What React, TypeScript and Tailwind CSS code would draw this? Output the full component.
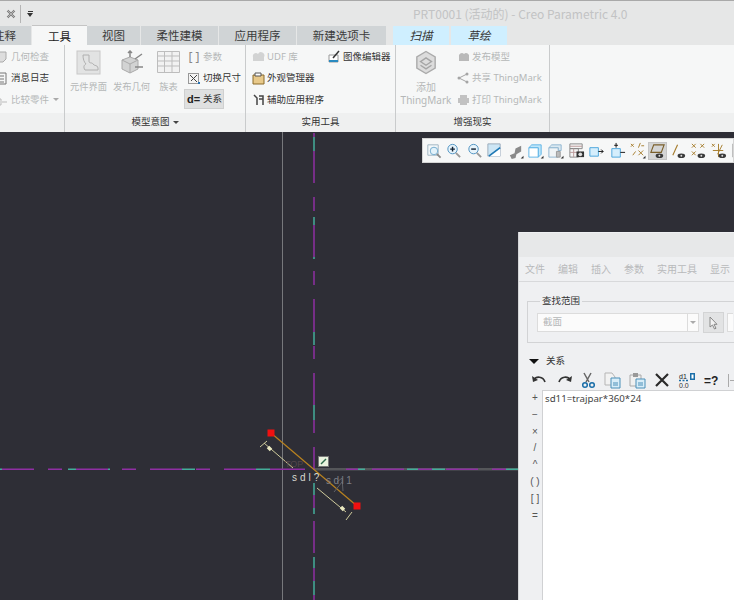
import type { ReactNode } from 'react';

const font = "[font-family:'Noto_Sans','Noto_Sans_CJK_SC',sans-serif]";

function Tab({ label, w }: { label: string; w: string }) {
    return <div className={`${w} h-[19px] mr-px bg-[#d0d4d6] text-[#3c3c3c] leading-[19px] text-center`}>{label}</div>;
}

function SmallRow({ icon, label, muted, className = '' }: { icon: ReactNode; label: string; muted?: boolean; className?: string }) {
    return (
        <div className={`flex items-center gap-[2px] h-[21.500px] text-[9.500px] whitespace-nowrap ${muted ? 'text-[#b5b7b8]' : 'text-[#333]'} ${className}`}>
            <span className="w-[14px] h-[14px] shrink-0 flex items-center justify-center">{icon}</span>
            {label}
        </div>
    );
}

function BigBtn({ icon, label, w }: { icon: ReactNode; label: string; w: string }) {
    return (
        <div className={`${w} shrink-0 flex flex-col items-center text-[9.300px] text-[#b5b7b8] whitespace-nowrap`}>
            <div className="h-[26px] flex items-center">{icon}</div>
            <div className="mt-[5px]">{label}</div>
        </div>
    );
}

function Group({ w, title, caret, children }: { w: string; title?: string; caret?: boolean; children: ReactNode }) {
    return (
        <div className={`${w} shrink-0 h-full flex flex-col border-r border-[#c9cbcc]`}>
            <div className="h-[68px] bg-[#f6f7f7]">{children}</div>
            <div className="flex-1 bg-[#eff0f0] flex items-center justify-center gap-[3px] text-[9.500px] text-[#333]">
                {title}
                {caret && <span className="w-0 h-0 border-x-[3px] border-x-transparent border-t-[3px] border-t-[#444]" />}
            </div>
        </div>
    );
}

const corner = <path d="M14.500 17.500h3v-3z" fill="#333" />;
const eye = (cx: number) => <g><ellipse cx={cx} cy="14.500" rx="4" ry="2.400" fill="#3a3a3a" /><circle cx={cx} cy="14.500" r="1" fill="#ddd" /></g>;

const tools = [
    <g key="a"><path d="M3 3h11v11H3z" fill="#f4f8fa" stroke="#9fb4c2" /><circle cx="9.500" cy="9.500" r="4" fill="#e3f2fa" stroke="#6fa9cc" /><path d="M12.500 12.500l4 4" stroke="#8a8a8a" strokeWidth="1.800" /></g>,
    <g key="b"><circle cx="8" cy="7.500" r="5" fill="#e8f4fb" stroke="#4a90c0" /><path d="M5.500 7.500h5M8 5v5" stroke="#123" strokeWidth="1.500" /><path d="M11.500 11.500l4.500 4.500" stroke="#999" strokeWidth="2" /></g>,
    <g key="c"><circle cx="8" cy="7.500" r="5" fill="#e8f4fb" stroke="#4a90c0" /><path d="M5.500 7.500h5" stroke="#123" strokeWidth="1.500" /><path d="M11.500 11.500l4.500 4.500" stroke="#999" strokeWidth="2" /></g>,
    <g key="d"><path d="M2 2h13v13H2z" fill="#cde6f5" stroke="#9ab" /><path d="M2 15h13V7z" fill="#fff" /><path d="M3 15L15 6" stroke="#1f79b5" strokeWidth="1.800" /></g>,
    <g key="e"><path d="M3 14l5-2 1-5 6-3v6l-5 3-1 4-4 1z" fill="#8a8a8a" />{corner}</g>,
    <g key="f"><path d="M2 6h10v10H2z" fill="#fff" stroke="#5db4e5" /><path d="M2 6l3-3h10v10l-3 3V6z" fill="#bfe6fa" stroke="#5db4e5" />{corner}</g>,
    <g key="g"><path d="M2 6h10v10H2z" fill="#f0f4f6" stroke="#8fb6d0" /><path d="M2 6l3-3h10v6h-3V6z" fill="#dbe9f1" stroke="#8fb6d0" /><path d="M10 10h4v6h-4z" fill="#bbb" stroke="#999" />{corner}</g>,
    <g key="h"><path d="M2 2h13v5H2z M2 7h9v9H2z" fill="#f4f4f4" stroke="#888" /><path d="M2 4.500h13M6 7v9M2 11h9" stroke="#b99" /><path d="M9 10h8v6H9z" fill="#333" /><circle cx="13" cy="13" r="2" fill="#ddd" /></g>,
    <g key="i"><path d="M2 6h9v9H2z" fill="#d5eefc" stroke="#4aa6dc" /><path d="M11 10h5M14 8l2 2-2 2" stroke="#111" fill="none" /></g>,
    <g key="j"><path d="M3 7h9v9H3z" fill="#d5eefc" stroke="#4aa6dc" /><path d="M7.500 1v5M5.500 3.500h4M12 11h5" stroke="#111" fill="none" /></g>,
    <g key="k" stroke="#a67c2c" fill="none"><path d="M2 2l3 3M5 2l-3 3M12 1l-2 5M4 14l3-4M10 9l5 5M15 9l-5 5M13 4h3" /><path d="M14.500 17.500h3v-3z" fill="#333" stroke="none" /></g>,
    <g key="l"><path d="M5 3h11l-3 8H2z" fill="none" stroke="#7a5f2a" strokeWidth="1.200" />{eye(11)}</g>,
    <g key="m"><path d="M3 14L8 3" stroke="#a67c2c" strokeWidth="1.200" />{eye(12)}</g>,
    <g key="n"><path d="M2 2l4 4M6 2l-4 4M11 2l4 4M15 2l-4 4M2 10l4 4M6 10l-4 4" stroke="#a67c2c" />{eye(12)}</g>,
    <g key="o"><path d="M2 2l3 3M5 2l-3 3M9 2v14M3 9h11M13 3L8 13" stroke="#a67c2c" fill="none" />{eye(13)}</g>,
    <path key="p" d="M2 2h14v14H2z" fill="#e6e6e6" stroke="#9a9a9a" />,
];

function Canvas() {
    return (
        <svg className="absolute inset-0 w-full h-full" viewBox="0 0 734 468" fill="none">
            <g transform="translate(0 -132)">
                <path d="M282.500 132V600" stroke="#77787c" />
                <path d="M314 469.300H518" stroke="#55565a" strokeWidth="2.500" />
                <g stroke="#8f2fa3" strokeWidth="1.500">
                    <path d="M314 133V137M314 151V183M314 197V211M314 225V257M314 271V285M314 299V332M314 346V359M314 373V405M314 420V433M314 447V470M314 495V508M314 521V553M314 568V581M314 595V600" />
                    <path d="M2 469.300H34M48 469.300H62M76 469.300H108M122 469.300H136M150 469.300H182M196 469.300H210M224 469.300H256M270 469.300H305M346 469.300H358M372 469.300H404M418 469.300H432M446 469.300H478M492 469.300H506" />
                </g>
                <g stroke="#44ad9a" strokeWidth="1.500">
                    <path d="M314 137V151M314 217V225M314 257V259M314 332V345M314 405V420M314 483V495M314 508V514M314 557V568M314 581V595" />
                    <path d="M0 469.300H2M68 469.300H76M108 469.300H110M182 469.300H195M256 469.300H270M358 469.300H365M407 469.300H418M432 469.300H445M506 469.300H518" />
                </g>
                <path d="M271 433L357 506" stroke="#b9821f" strokeWidth="1.200" />
                <path d="M264 443L293 468M317 488L346 512M260 447L267 441M346 520L352 512" stroke="#cfcb9c" />
                <path d="M268 447l3 3M341 507l3 3" stroke="#e9e7c0" strokeWidth="3.500" />
                <path d="M337 482l5-4 1 13M334 492l8-10" stroke="#606268" />
                <rect x="267.500" y="429.500" width="7" height="7" fill="#f01010" />
                <rect x="353.500" y="502.500" width="7" height="7" fill="#f01010" />
                <rect x="318.500" y="456.500" width="10" height="10" fill="#eaf3df" stroke="#777" />
                <path d="M321 464L326 459" stroke="#2c6b4a" strokeWidth="1.500" />
            </g>
        </svg>
    );
}

function DialogToolbar() {
    return (
        <svg width="202" height="17" viewBox="0 0 202 17" fill="none" className="shrink-0">
            <path d="M2 8c2-4 9-4 11 2" stroke="#333" strokeWidth="1.700" />
            <path d="M0 4l1 6 5-2z" fill="#333" />
            <path d="M38 8c-2-4-9-4-11 2" stroke="#333" strokeWidth="1.700" />
            <path d="M40 4l-1 6-5-2z" fill="#333" />
            <path d="M52 1l5 9M59 1l-5 9" stroke="#666" strokeWidth="1.500" />
            <circle cx="53" cy="13" r="2.300" stroke="#1a6ea8" strokeWidth="1.500" />
            <circle cx="60" cy="13" r="2.300" stroke="#1a6ea8" strokeWidth="1.500" />
            <path d="M73 1h7l3 4v8H73z" fill="#f2f2f2" stroke="#b5b5b5" />
            <path d="M79 6h9v10h-9z" fill="#d8edf8" stroke="#4a8fb8" />
            <path d="M81 11h5M81 13h5" stroke="#4a8fb8" />
            <path d="M98 3h11v11H98z" fill="#f0f0f0" stroke="#aaa" />
            <path d="M101 1h5v4h-5z" fill="#999" />
            <path d="M104 7h9v9h-9z" fill="#d8edf8" stroke="#4a8fb8" />
            <path d="M106 11h5M106 13h5" stroke="#4a8fb8" />
            <path d="M124 2l12 12M136 2l-12 12" stroke="#2a2a2a" strokeWidth="2.200" />
            <text x="147" y="7" fontSize="7" fill="#222" fontFamily="Liberation Sans">d1</text>
            <text x="147" y="15.500" fontSize="7" fill="#333" fontFamily="Liberation Sans">0.0</text>
            <path d="M147 8.500h9" stroke="#1a6ea8" strokeDasharray="2 1.500" strokeWidth="1.500" />
            <rect x="158" y="1" width="5" height="7" fill="#1a6ea8" />
            <rect x="159.500" y="2.500" width="2" height="4" fill="#fff" />
            <text x="172" y="13" fontSize="12" fontWeight="bold" fill="#222" fontFamily="Liberation Sans">=?</text>
            <path d="M196.500 2v13M198 8.500h4" stroke="#aaa" />
        </svg>
    );
}

export default function App() {
    return (
        <div className={`relative w-[734px] h-[600px] overflow-hidden bg-[#2e2e36] ${font}`}>
            {/* title bar */}
            <div className="h-[26px] bg-[#e6e7e7] border-t border-[#a9a9a9] flex items-center">
                <svg width="10" height="10" viewBox="0 0 10 10" className="ml-[6px]" fill="none"><path d="M1.500 1.500l7 7M8.500 1.500l-7 7" stroke="#777" strokeWidth="2.200" /><path d="M1 1l8 8M9 1l-8 8" stroke="#ddd" strokeWidth=".6" /></svg>
                <div className="ml-[4px] w-px h-[18px] bg-[#b5b5b5]" />
                <div className="ml-[6px] flex flex-col items-center gap-px">
                    <span className="w-[5px] h-px bg-[#333]" />
                    <span className="w-0 h-0 border-x-[3px] border-x-transparent border-t-[4px] border-t-[#333]" />
                </div>
                <div className="ml-[380px] text-[12px] text-[#c2c3c4] whitespace-nowrap [font-family:'Noto_Sans_CJK_SC',sans-serif]">PRT0001 (活动的) - Creo Parametric 4.0</div>
            </div>

            {/* tabs */}
            <div className="relative h-[19px] bg-[#e6e7e7] flex items-end text-[11.500px]">
                <div className="w-[31px] h-[19px] mr-px bg-[#d0d4d6] text-[#3c3c3c] leading-[19px] pr-[15px] overflow-hidden whitespace-nowrap flex justify-end"><span className="shrink-0">注释</span></div>
                <div className="w-[55px] h-[20px] bg-[#f6f7f7] text-[#222] leading-[21px] text-center border-t border-[#c4c4c4]">工具</div>
                <Tab label="视图" w="w-[53px]" />
                <Tab label="柔性建模" w="w-[77px]" />
                <Tab label="应用程序" w="w-[77px]" />
                <Tab label="新建选项卡" w="w-[89px]" />
                <div className="ml-[6px] w-[56px] h-[19px] mr-[2px] bg-[#cfefff] text-[#333] italic leading-[19px] text-center">扫描</div>
                <div className="w-[56px] h-[19px] bg-[#cfefff] text-[#333] italic leading-[19px] text-center">草绘</div>
            </div>

            {/* ribbon */}
            <div className="h-[87px] flex bg-[#f0f1f1]">
                <Group w="w-[65px]">
                    <div className="pt-[1px] overflow-hidden h-full">
                        <SmallRow muted label="几何检查" className="-ml-[5px]" icon={<svg width="12" height="12" viewBox="0 0 12 12" fill="none"><path d="M2 1h8v7l-3 3H2z" fill="#ddd" stroke="#aaa" /></svg>} />
                        <SmallRow label="消息日志" className="-ml-[5px]" icon={<svg width="12" height="13" viewBox="0 0 12 13" fill="none"><path d="M2 1h8v11H2zM4 4h4M4 7h4M4 10h4" stroke="#777" /></svg>} />
                        <div className="flex items-center">
                            <SmallRow muted label="比较零件" className="-ml-[5px]" icon={<svg width="12" height="12" viewBox="0 0 12 12" fill="none"><path d="M1 5h4v6H1zM6 8h5" stroke="#bbb" /></svg>} />
                            <span className="ml-[4px] w-0 h-0 border-x-[3px] border-x-transparent border-t-[3px] border-t-[#aaa]" />
                        </div>
                    </div>
                </Group>
                <Group w="w-[181px]" title="模型意图" caret>
                    <div className="flex pl-[2px] pt-[4px]">
                        <BigBtn w="w-[43px]" label="元件界面" icon={<svg width="25" height="25" viewBox="0 0 25 25" fill="none"><rect x="1" y="1" width="23" height="23" fill="#e2e3e3" stroke="#c8c8c8" /><path d="M7 5h6v6c0 3 3 1 4 3s5 1 5 4v2H9c-2-3-1-5 1-6-2-2-3-5-3-9z" stroke="#b0b0b0" fill="none" /></svg>} />
                        <BigBtn w="w-[43px]" label="发布几何" icon={<svg width="24" height="24" viewBox="0 0 24 24" fill="none"><path d="M2 10l8-3 8 3v9l-8 4-8-4z" fill="#d2d3d3" stroke="#aaa" /><path d="M2 10l8 4 8-4M10 14v9" stroke="#aaa" /><path d="M10 7V1M8 3l2-2 2 2M15 9l7-5M15 17h8" stroke="#888" strokeWidth="1.500" /></svg>} />
                        <BigBtn w="w-[31px]" label="族表" icon={<svg width="23" height="22" viewBox="0 0 23 22" fill="none"><path d="M.5.500h22v21H.5zM.5 5h22M.5 10h22M.5 15h22M7.500.500v21M15 .500v21" stroke="#bdbdbd" fill="#f2f2f2" /></svg>} />
                        <div className="-mt-[3px] w-[60px] shrink-0">
                            <SmallRow muted label="参数" className="ml-[3px]" icon={<span className="text-[12px] text-[#888] whitespace-nowrap">[ ]</span>} />
                            <SmallRow label="切换尺寸" className="ml-[3px]" icon={<svg width="13" height="13" viewBox="0 0 13 13" fill="none"><rect x=".5" y="1.500" width="10" height="10" fill="#f4f4f4" stroke="#999" /><path d="M2 3l7 7M9 3l-6 6" stroke="#444" /><rect x="10" y="10" width="2" height="2" fill="#2773b5" /></svg>} />
                            <div className="w-[40px] h-[20px] bg-[#dfe0e0] border border-[#cfd0d0] flex items-center pl-[2px] text-[9.500px] text-[#333] whitespace-nowrap">
                                <span className="w-[16px] font-bold text-[11px] leading-none text-[#222] [font-family:'Liberation_Sans',sans-serif]">d=</span>关系
                            </div>
                        </div>
                    </div>
                </Group>
                <Group w="w-[150px]" title="实用工具">
                    <div className="relative pl-[5px] pt-[1px]">
                        <SmallRow muted label="UDF 库" icon={<svg width="14" height="12" viewBox="0 0 14 12"><path d="M2 6a3 3 0 015-3 3 3 0 016 3v4H2z" fill="#d2d3d3" /></svg>} />
                        <SmallRow label="外观管理器" icon={<svg width="13" height="13" viewBox="0 0 13 13"><path d="M1 3h11v9H1z" fill="#e8c98a" stroke="#8a6a2a" /><path d="M3 1h6v3H3z" fill="#fff" stroke="#555" /></svg>} />
                        <SmallRow label="辅助应用程序" icon={<svg width="13" height="13" viewBox="0 0 13 13" fill="none"><path d="M2 2l3 3v7M7 3h4v9M7 6h4" stroke="#444" strokeWidth="1.500" /></svg>} />
                        <SmallRow label="图像编辑器" className="absolute left-[81px] top-[1px]" icon={<svg width="13" height="13" viewBox="0 0 13 13" fill="none"><path d="M1 5h9v7H1z" fill="#fff" stroke="#999" /><path d="M1 11h9" stroke="#2a8ac0" strokeWidth="2" /><path d="M5 8l6-7" stroke="#333" strokeWidth="1.500" /></svg>} />
                    </div>
                </Group>
                <Group w="w-[154px]" title="增强现实">
                    <div className="flex">
                        <div className="w-[60px] shrink-0 flex flex-col items-center text-[10px] leading-[13px] text-[#b5b7b8]">
                            <svg width="22" height="25" viewBox="0 0 24 26" fill="none" className="mt-[5px]"><path d="M12 1l10 6v12l-10 6-10-6V7z" fill="#dcdcdc" stroke="#aaa" strokeWidth="1.500" /><path d="M6 12l6-4 6 4-6 4zM6 16l6 4 6-4" stroke="#a5a5a5" strokeWidth="1.500" /></svg>
                            <div className="mt-[6px]">添加</div>
                            <div>ThingMark</div>
                        </div>
                        <div className="pt-[1px]">
                            <SmallRow muted label="发布模型" icon={<svg width="13" height="10" viewBox="0 0 13 10"><path d="M2 5a3 3 0 015-3 3 3 0 015 3v4H2z" fill="#b9b9b9" /></svg>} />
                            <SmallRow muted label="共享 ThingMark" icon={<svg width="12" height="12" viewBox="0 0 12 12" fill="none"><path d="M10 2L2 6l8 4" stroke="#a5a5a5" /><circle cx="10" cy="2" r="1.500" fill="#a5a5a5" /><circle cx="2" cy="6" r="1.500" fill="#a5a5a5" /><circle cx="10" cy="10" r="1.500" fill="#a5a5a5" /></svg>} />
                            <SmallRow muted label="打印 ThingMark" icon={<svg width="13" height="12" viewBox="0 0 13 12"><path d="M3 1h7v3h2v5h-2v2H3V9H1V4h2z" fill="#c2c2c2" /></svg>} />
                        </div>
                    </div>
                </Group>
                <div className="flex-1 flex flex-col">
                    <div className="h-[68px] bg-[#f6f7f7]" />
                    <div className="flex-1 bg-[#eff0f0]" />
                </div>
            </div>

            {/* graphics area */}
            <div className="relative h-[468px]">
                <Canvas />
                <span className="absolute left-[292px] top-[339px] text-[10px] leading-[14px] tracking-[3px] text-[#d9d9d0] [font-family:'Liberation_Sans',sans-serif]">sdl?</span>
                <span className="absolute left-[326px] top-[342px] text-[10px] leading-[14px] tracking-[2.500px] text-[#7c7f85] [font-family:'Liberation_Sans',sans-serif]">sdl1</span>
                <span className="absolute left-[285px] top-[326px] text-[9px] leading-[12px] text-[#54464c] [font-family:'Liberation_Sans',sans-serif]">TOP</span>

                {/* view toolbar */}
                <div className="absolute left-[422px] top-[6px] w-[312px] h-[25px] bg-[#f6f7f7] border border-[#d5d5d5] flex items-center pl-px overflow-hidden">
                    {tools.map((t, i) => (
                        <div key={i} className={`w-[19px] h-[18px] mr-[1.400px] shrink-0 flex items-center justify-center ${i === 11 ? 'bg-[#d4d5d5] border border-[#c5c5c5]' : ''}`}>
                            <svg width="17" height="17" viewBox="0 0 18 18" className="shrink-0">{t}</svg>
                        </div>
                    ))}
                </div>

                {/* relations dialog */}
                <div className="absolute left-[518px] top-[100px] w-[216px] h-[368px] bg-[#eff0f2] flex flex-col border-l border-[#d5d6d8]">
                    <div className="h-[25px] bg-[#e7e8e9] border-t border-[#eff0f2]" />
                    <div className="h-[25px] border-b border-[#d8d9db] flex items-center pl-[6px] gap-[13px] text-[10px] text-[#b8b9bb] whitespace-nowrap">
                        <span>文件</span><span>编辑</span><span>插入</span><span>参数</span><span>实用工具</span><span>显示</span>
                    </div>
                    <div className="relative mt-[19px] ml-[8px] h-[42px] border border-[#d2d3d5] border-r-0 pl-[9px] pt-[11px] flex gap-[4px]">
                        <span className="absolute left-[12px] -top-[8px] px-[2px] bg-[#eff0f2] text-[9.500px] leading-[14px] text-[#333]">查找范围</span>
                        <div className="w-[162px] h-[19px] shrink-0 bg-[#fbfbfb] border border-[#dcdcdc] flex items-center text-[9.500px] text-[#b5b7b8] pl-[5px]">
                            截面
                            <span className="ml-auto h-full w-[11px] border-l border-[#dcdcdc] flex items-center justify-center">
                                <span className="w-0 h-0 border-x-[3px] border-x-transparent border-t-[3px] border-t-[#aaa]" />
                            </span>
                        </div>
                        <div className="w-[21px] h-[21px] shrink-0 -mt-px bg-[#e2e3e4] border border-[#d3d4d5] flex items-center justify-center">
                            <svg width="10" height="14" viewBox="0 0 10 14" fill="none"><path d="M1 1v10l2.500-2 2 4 1.500-.7-2-4H8z" fill="#f2f2f2" stroke="#888" /></svg>
                        </div>
                        <div className="w-[6px] h-[19px] shrink-0 -ml-px bg-[#fbfbfb] border border-[#dcdcdc] border-r-0" />
                    </div>
                    <div className="mt-[12px] h-[12px] ml-[10px] flex items-center text-[9.500px] text-[#333]">
                        <span className="w-0 h-0 border-x-[5px] border-x-transparent border-t-[5px] border-t-[#111]" />
                        <span className="ml-[7px]">关系</span>
                    </div>
                    <div className="mt-[5px] ml-[13px] h-[17px] flex overflow-hidden">
                        <DialogToolbar />
                    </div>
                    <div className="flex-1 flex mt-[1px] min-h-0">
                        <div className="w-[23px] shrink-0 pl-[9px]">
                            <div className="w-[14px] flex flex-col items-center text-[10px] leading-[16.800px] text-[#555] [font-family:'Liberation_Sans',sans-serif]">
                                {['+', '−', '×', '/', '^', '( )', '[ ]', '='].map(s => <span key={s} className="whitespace-nowrap">{s}</span>)}
                            </div>
                        </div>
                        <div className="flex-1 bg-white border-l border-t border-[#d0d1d3] pl-[2px] pt-px text-[9.700px] leading-[14px] text-[#444]">
                            sd11=trajpar*360*24
                        </div>
                    </div>
                </div>
            </div>
        </div>
    );
}
